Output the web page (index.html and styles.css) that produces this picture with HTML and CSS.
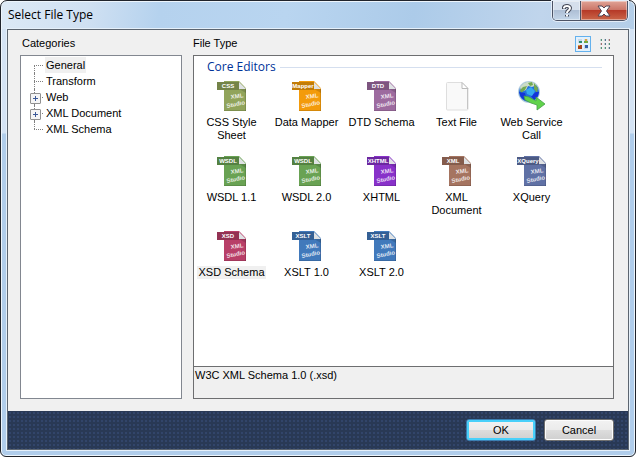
FILE: index.html
```
<!DOCTYPE html>
<html lang="en">
<head>
<meta charset="utf-8">
<title>Select File Type</title>
<link rel="stylesheet" href="styles.css">
</head>
<body>
<svg class="symbols" aria-hidden="true">
  <symbol id="file" viewBox="0 0 30 30">
    <path d="M7 0h16l6 7v23H7z" fill="currentColor"/>
    <path d="M0 1h22v8H0z" fill="currentColor"/>
    <path d="M0 1h22v8H0z" fill="#000" opacity=".2"/>
    <path d="M22 0h8v8z" fill="#fff"/>
    <path d="M22 1v7h7z" fill="#dfe2e4"/>
    <path d="M22 8h7v4z" fill="#000" opacity=".15"/>
    <path d="M7 29.500h22M28.500 8v22" stroke="#000" stroke-opacity=".12" fill="none"/>
    <g fill="#fff" fill-opacity=".85" class="brand"><text x="14" y="18" transform="rotate(-8 14 18)">XML</text><text x="10" y="27" transform="rotate(-12 10 27)">Studio</text></g>
  </symbol>
</svg>
<div class="window">
  <header class="titlebar">
    <h1>Select File Type</h1>
    <div class="controls">
      <button class="help" aria-label="Help"><svg width="12" height="14" viewBox="0 0 12 14"><path d="M3 5V3.500Q3.500 2 6 2t3 2q0 1.500-1.500 2.500Q6 7.500 6 9M6 11v1.500" fill="none" stroke="#454957" stroke-width="4"/><path d="M3 4.500V3.500Q3.500 2 6 2t3 2q0 1.500-1.500 2.500Q6 7.500 6 9M6 10.500v2" fill="none" stroke="#fff" stroke-width="2"/></svg></button>
      <button class="close" aria-label="Close"><svg width="14" height="12" viewBox="0 0 14 12"><path d="M1 1h4l2 2 2-2h4L9.500 6l3.500 5H9L7 9l-2 2H1l3.500-5z" fill="#fff" stroke="#504554"/></svg></button>
    </div>
  </header>
  <main class="client">
    <div class="content">
      <section class="categories">
        <h2>Categories</h2>
        <ul class="tree">
          <li><button class="selected">General</button></li>
          <li><button>Transform</button></li>
          <li class="branch"><button>Web</button></li>
          <li class="branch"><button>XML Document</button></li>
          <li><button>XML Schema</button></li>
        </ul>
      </section>
      <section class="types">
        <div class="heading">
          <h2>File Type</h2>
          <button class="view active" aria-label="Large icons"><svg width="10" height="10" viewBox="0 0 10 10"><path d="M0 0h4v4H0zM6 0h4v4H6zM0 6h4v4H0zM6 6h4v4H6z" fill="#c9d9e9"/><path d="M1 2h3v2H1z" fill="#2e8b72"/><path d="M6 2h4v2H6z" fill="#75a83e"/><path d="M7 0h2v2H7z" fill="#e6a33d"/><path d="M0 6h4v4H0z" fill="#a6431c"/><path d="M0 6h2v1H0z" fill="#e6a33d"/><path d="M7 6h3v3H7z" fill="#315fa8"/></svg></button>
          <button class="view" aria-label="Small icons"><svg width="10" height="10" viewBox="0 0 10 10"><path d="M0 1h2M4 1h2M8 1h2M0 5h2M4 5h2M8 5h2M0 9h2M4 9h2M8 9h2" stroke="#c3cfcf" stroke-width="2"/><path d="M1 1h1M9 5h1M5 9h1M1 9h1" stroke="#529577" stroke-width="2"/><path d="M9 1h1M1 5h1" stroke="#a56d70" stroke-width="2"/><path d="M5 1h1M5 5h1M9 9h1" stroke="#577491" stroke-width="2"/></svg></button>
        </div>
        <div class="panel">
          <div class="list">
            <h3>Core Editors</h3>
            <div class="grid">
              <button class="item css"><svg viewBox="0 0 30 30"><use href="#file"/><text class="tag" x="11" y="7">CSS</text></svg><span>CSS Style Sheet</span></button>
              <button class="item mapper"><svg viewBox="0 0 30 30"><use href="#file"/><text class="tag" x="11" y="7">Mapper</text></svg><span>Data Mapper</span></button>
              <button class="item dtd"><svg viewBox="0 0 30 30"><use href="#file"/><text class="tag" x="11" y="7">DTD</text></svg><span>DTD Schema</span></button>
              <button class="item"><svg viewBox="0 0 30 30"><path d="M4.500 2.500q0-1 1-1H20l6 6V28q0 1-1 1H5.500q-1 0-1-1z" fill="#f9f9f9" stroke="#dedede"/><path d="M20 1.500v6h6z" fill="#fff" stroke="#bbb"/><path d="M25.500 8v20" stroke="#c5c5c5"/></svg><span>Text File</span></button>
              <button class="item"><svg viewBox="0 0 30 30"><circle cx="12" cy="11" r="11" fill="#b4cede"/><circle cx="12" cy="11" r="10" fill="#246fdc"/><path d="M3 6Q7 0 15 1l5 3-5 2-4-1-2 4-5 2z" fill="#cbdcc6"/><path d="M3 9l3-3 4-1-2 4-4 3zM17 2l4 5-1 5-3-4zM11 2l4-1 1 3-3 1z" fill="#72a853"/><path d="M2 11l6 1 2 8q-6-1-8-9M19 11l3 0q-1 6-5 8l-3-4z" fill="#1334d8"/><path d="M9 9l5-3 4 4-3 5-5-2z" fill="#35a9ef"/><path d="M7 15l5 1 7 4v-4l9 7-8 6v-5l-6-2-6-3z" fill="#61d34b" stroke="#469f4a" stroke-width=".8"/></svg><span>Web Service Call</span></button>
              <button class="item wsdl"><svg viewBox="0 0 30 30"><use href="#file"/><text class="tag" x="11" y="7">WSDL</text></svg><span>WSDL 1.1</span></button>
              <button class="item wsdl"><svg viewBox="0 0 30 30"><use href="#file"/><text class="tag" x="11" y="7">WSDL</text></svg><span>WSDL 2.0</span></button>
              <button class="item xhtml"><svg viewBox="0 0 30 30"><use href="#file"/><text class="tag" x="11" y="7">XHTML</text></svg><span>XHTML</span></button>
              <button class="item xml"><svg viewBox="0 0 30 30"><use href="#file"/><text class="tag" x="11" y="7">XML</text></svg><span>XML Document</span></button>
              <button class="item xquery"><svg viewBox="0 0 30 30"><use href="#file"/><text class="tag" x="11" y="7">XQuery</text></svg><span>XQuery</span></button>
              <button class="item xsd selected"><svg viewBox="0 0 30 30"><use href="#file"/><text class="tag" x="11" y="7">XSD</text></svg><span>XSD Schema</span></button>
              <button class="item xslt"><svg viewBox="0 0 30 30"><use href="#file"/><text class="tag" x="11" y="7">XSLT</text></svg><span>XSLT 1.0</span></button>
              <button class="item xslt"><svg viewBox="0 0 30 30"><use href="#file"/><text class="tag" x="11" y="7">XSLT</text></svg><span>XSLT 2.0</span></button>
            </div>
          </div>
          <p class="description">W3C XML Schema 1.0 (.xsd)</p>
        </div>
      </section>
    </div>
    <footer>
      <button class="action default">OK</button>
      <button class="action">Cancel</button>
    </footer>
  </main>
</div>
</body>
</html>
```
FILE: styles.css
```
* { box-sizing: border-box; }
body { margin: 0; background: #fff; color: #000; font: 11px/16px "Liberation Sans", sans-serif; }
h1, h2, h3, p, ul { margin: 0; padding: 0; font-weight: normal; font-size: inherit; }
button { font: inherit; color: inherit; padding: 0; border: 0; background: none; }
.symbols { display: none; }

.window {
  display: flex;
  flex-direction: column;
  min-height: 100vh;
  padding: 0 6px 6px;
  border: 1px solid #20242c;
  border-radius: 7px 7px 6px 6px;
  box-shadow: inset 0 0 0 1px #edf5fc;
  background: linear-gradient(#d4e3f4 0 132px, #b0cdeb 133px);
}
.titlebar {
  display: flex;
  justify-content: space-between;
  height: 27px;
  margin: 1px -5px 0;
  padding: 0 6px;
  border-radius: 5px 5px 0 0;
  background: linear-gradient(100deg, #dce9f6 0, #cfe0f2 14%, #b5d2ee 25%, #b9d5f0 45%, #accbe9 65%, #c0d5ec 85%, #b4cee8);
}
.titlebar h1 { font: 12px/26px "Open Sans", sans-serif; }
.controls { display: flex; height: 20px; margin-top: -1px; border: 1px solid #4c5366; border-top: 0; border-radius: 0 0 5px 5px; overflow: hidden; box-shadow: 0 0 0 1px #e4edf8; }
.controls button { display: flex; align-items: center; justify-content: center; box-shadow: inset 0 0 0 1px rgba(255,255,255,.4); }
.help { width: 28px; border-right: 1px solid #4c5366; background: linear-gradient(#d5dfec 45%, #aebfd5 50%, #c4d6e9); }
.controls .help { border-right: 1px solid #4c5366; }
.close { width: 46px; background: linear-gradient(#e0a396, #cc7769 45%, #b63a28 50%, #ca6548); }

.client { flex: 1; display: flex; flex-direction: column; border: 1px solid #5c6570; outline: 1px solid #e5f0fa; background: #f0f0f0; }
.content { flex: 1; display: flex; gap: 11px; padding: 5px 14px 12px 12px; }
.categories { width: 162px; display: flex; flex-direction: column; }
.categories h2, .heading { height: 20px; padding-left: 2px; }
.types { flex: 1; min-width: 0; display: flex; flex-direction: column; }
.heading { display: flex; gap: 6px; padding: 0 1px 0 0; }
.heading h2 { flex: 1; }
.view { display: grid; place-items: center; width: 16px; height: 16px; border: 1px solid transparent; margin-top: 1px; }
.view.active { border-color: #64b1ed; background: #e3f1fc; }

.tree { flex: 1; border: 1px solid #828790; background: #fff; list-style: none; padding: 1px 0 0 13px; }
.tree li { position: relative; display: flex; height: 16px; padding-left: 11px; }
.tree button { padding: 0 1px; line-height: 16px; }
.tree .selected { background: #f0f0f0; }
.tree li::before { content: ""; position: absolute; left: 0; top: 0; height: 16px; border-left: 1px dotted #808080; }
.tree li:first-child::before { top: 8px; height: 8px; }
.tree li:last-child::before { height: 8px; }
.tree li::after { content: ""; position: absolute; left: 0; top: 8px; width: 9px; border-top: 1px dotted #808080; }
.branch button::before {
  content: "";
  position: absolute;
  z-index: 1;
  left: -4px;
  top: 4px;
  width: 9px;
  height: 9px;
  border: 1px solid #919191;
  border-radius: 1px;
  background: linear-gradient(#3b5998, #3b5998) center / 5px 1px no-repeat, linear-gradient(#3b5998, #3b5998) center / 1px 5px no-repeat, #f5f5f5;
}

.panel { flex: 1; display: flex; flex-direction: column; border: 1px solid #6d6e70; }
.list { flex: 1; background: #fff; padding-top: 2px; }
.list h3 { display: flex; align-items: center; gap: 4px; height: 18px; padding: 0 11px 0 13px; color: #003399; font: 12px/18px "Open Sans", sans-serif; }
.list h3::after { content: ""; flex: 1; height: 1px; background: #d5dfef; }
.grid { display: grid; grid-template-columns: repeat(auto-fill, 75px); grid-auto-rows: 75px; padding-top: 5px; }
.item { display: flex; flex-direction: column; align-items: center; gap: 5px; line-height: 13px; }
.item svg { width: 30px; height: 30px; flex: none; }
.item span { padding: 0 1px; max-width: 72px; }
.item.selected span { background: #f0f0f0; }
.tag { fill: #fff; font: bold 6px "Liberation Sans", sans-serif; text-anchor: middle; }
.brand { font: bold 6px "Liberation Sans", sans-serif; }
.css svg { color: #91a45b; }
.mapper svg { color: #f39b0b; }
.dtd svg { color: #9d6b9f; }
.wsdl svg { color: #69a253; }
.xhtml svg { color: #8831c9; }
.xml svg { color: #a57460; }
.xquery svg { color: #6071a5; }
.xsd svg { color: #b83f68; }
.xslt svg { color: #4179bb; }
.description { height: 32px; padding: 0 1px; border-top: 1px solid #6d6e70; }

footer {
  display: flex;
  justify-content: flex-end;
  gap: 8px;
  height: 38px;
  padding: 8px 14px;
  background: radial-gradient(circle, #32456a 25%, transparent 30%) 0 0 / 4px 4px, #293955;
}
.action { width: 70px; height: 22px; border: 1px solid #707070; border-radius: 3px; box-shadow: inset 0 0 0 1px #fcfcfc; background: linear-gradient(#f2f2f2, #ebebeb 50%, #dddddd 50%, #cfcfcf); }
.default { border-color: #3c7fb1; box-shadow: inset 0 0 0 2px #48d0fa; }
```
